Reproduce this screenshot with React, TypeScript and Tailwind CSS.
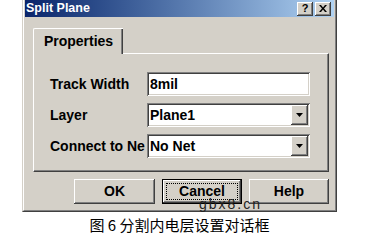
const raised =
  'bg-[#d4d0c8] shadow-[inset_-1px_-1px_0_#404040,inset_1px_1px_0_#ffffff,inset_-2px_-2px_0_#808080,inset_2px_2px_0_#d4d0c8]';
const sunken =
  'bg-white shadow-[inset_1px_1px_0_#808080,inset_-1px_-1px_0_#ffffff,inset_2px_2px_0_#404040,inset_-2px_-2px_0_#d4d0c8]';

function TitleButton({ children }: { children: React.ReactNode }) {
  return (
    <div className={`w-[16px] h-[14px] flex items-center justify-center ${raised}`}>{children}</div>
  );
}

function TextField({ value }: { value: string }) {
  return (
    <div className={`w-[163px] h-[24px] flex items-center pl-[3px] ${sunken}`}>
      <span className="text-[14px] font-bold text-black leading-none">{value}</span>
    </div>
  );
}

function Combo({ value }: { value: string }) {
  return (
    <div className={`w-[163px] h-[24px] flex items-center pl-[3px] pr-[2px] ${sunken}`}>
      <span className="flex-1 text-[14px] font-bold text-black leading-none">{value}</span>
      <div className={`w-[17px] h-[20px] flex items-center justify-center ${raised}`}>
        <svg width="7" height="4" viewBox="0 0 7 4">
          <path d="M0 0h7L3.5 4z" fill="#000" />
        </svg>
      </div>
    </div>
  );
}

function Row({ label, children }: { label: string; children: React.ReactNode }) {
  return (
    <div className="flex items-center h-[24px]">
      <div className="w-[97px] whitespace-nowrap text-[14px] font-bold text-black">{label}</div>
      {children}
    </div>
  );
}

function DlgButton({ label, width, focused }: { label: string; width: string; focused?: boolean }) {
  if (focused) {
    return (
      <div className={`${width} h-[25px] border border-black bg-[#d4d0c8]`}>
        <div className={`w-full h-full p-[3px] ${raised}`}>
          <div className="w-full h-full border border-dotted border-black flex items-center justify-center text-[14px] font-bold text-black">
            {label}
          </div>
        </div>
      </div>
    );
  }
  return (
    <div className={`${width} h-[25px] flex items-center justify-center text-[14px] font-bold text-black ${raised}`}>
      {label}
    </div>
  );
}

export default function App() {
  return (
    <div className="relative w-[377px] h-[237px] bg-white overflow-hidden font-['Liberation_Sans',Arial,sans-serif]">
      <div className="ml-[22px] w-[315px] h-[212px] border-l border-r border-b border-l-[#d4d0c8] border-r-[#404040] border-b-[#404040]">
        <div className="w-full h-full border-l border-r border-b border-l-white border-r-[#808080] border-b-[#808080] px-[1px] pb-[1px] bg-[#d4d0c8] flex flex-col">
          {/* title bar */}
          <div className="h-[17px] flex items-center justify-between pl-[1px] pr-[3px] bg-gradient-to-r from-[#0a246a] to-[#b0d2f2]">
            <span className="text-[12.5px] font-bold text-white leading-none">Split Plane</span>
            <div className="flex gap-[2px]">
              <TitleButton>
                <span className="text-[11px] font-bold text-black leading-none">?</span>
              </TitleButton>
              <TitleButton>
                <svg width="8" height="7" viewBox="0 0 8 7">
                  <path d="M0 0h2l2 2.5L6 0h2L5 3.5 8 7H6L4 4.5 2 7H0l3-3.5z" fill="#000" />
                </svg>
              </TitleButton>
            </div>
          </div>

          <div className="flex-1 flex flex-col pl-[8px] pr-[5px] pt-[11px]">
            {/* tab */}
            <div className="relative z-10 -mb-[1px] w-[90px] h-[26px] bg-[#d4d0c8] border-t border-l border-white rounded-tl-[2px] shadow-[inset_-1px_0_0_#404040,inset_-2px_0_0_#808080] flex items-center justify-center">
              <span className="text-[14px] font-bold text-black">Properties</span>
            </div>
            {/* panel */}
            <div className="h-[119px] border-t border-l border-white border-r border-b border-r-[#404040] border-b-[#404040] shadow-[inset_-1px_-1px_0_#808080] pl-[16px] pt-[18px] flex flex-col gap-[7px]">
              <Row label="Track Width">
                <TextField value="8mil" />
              </Row>
              <Row label="Layer">
                <Combo value="Plane1" />
              </Row>
              <Row label="Connect to Ne">
                <Combo value="No Net" />
              </Row>
            </div>
            {/* buttons */}
            <div className="flex justify-end gap-[7px] mt-[7px]">
              <DlgButton label="OK" width="w-[81px]" />
              <DlgButton label="Cancel" width="w-[80px]" focused />
              <DlgButton label="Help" width="w-[80px]" />
            </div>
          </div>
        </div>
      </div>

      <div className="ml-[22px] w-[315px] mt-[3px] text-center text-[15px] leading-[20px] text-black font-['Noto_Sans_CJK_SC',sans-serif]">
        图 6 分割内电层设置对话框
      </div>

      <div className="absolute left-[199px] top-[196px] text-[14px] leading-[16px] tracking-[2px] text-[#222]">
        gbx8.cn
      </div>
    </div>
  );
}
